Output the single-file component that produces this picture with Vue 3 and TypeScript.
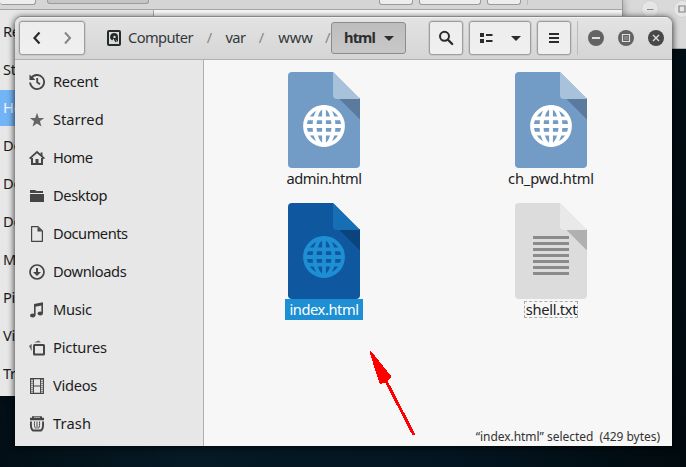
<script setup lang="ts">
interface Place { name: string; icon: string; tracking: number }
interface FileItem { name: string; kind: 'web' | 'text'; tracking: number; selected?: boolean; focused?: boolean }

const places: Place[] = [
  { name: 'Recent', icon: 'recent', tracking: -0.3 },
  { name: 'Starred', icon: 'starred', tracking: 0 },
  { name: 'Home', icon: 'home', tracking: -0.6 },
  { name: 'Desktop', icon: 'desktop', tracking: -0.4 },
  { name: 'Documents', icon: 'documents', tracking: -0.5 },
  { name: 'Downloads', icon: 'downloads', tracking: -0.38 },
  { name: 'Music', icon: 'music', tracking: -0.3 },
  { name: 'Pictures', icon: 'pictures', tracking: -0.15 },
  { name: 'Videos', icon: 'videos', tracking: -0.3 },
  { name: 'Trash', icon: 'trash', tracking: 0.15 },
]

// Only the first letters of these rows stay uncovered by the front window.
const coveredPlaces = places.map((p) => p.name.slice(0, 2))

const files: FileItem[] = [
  { name: 'admin.html', kind: 'web', tracking: -0.45 },
  { name: 'ch_pwd.html', kind: 'web', tracking: -0.15 },
  { name: 'index.html', kind: 'web', tracking: -0.42, selected: true },
  { name: 'shell.txt', kind: 'text', tracking: -0.3, focused: true },
]
</script>

<template>
  <div class="desktop">
    <div class="far-window">
      <span class="ghost"><svg width="16" height="16" viewBox="0 0 16 16"><path d="M5 8.500h6.500" stroke="#8a8a8a" fill="none" /></svg></span>
      <span class="ghost"><svg width="16" height="16" viewBox="0 0 16 16"><path d="M5 5h6v6H5z" stroke="#858585" stroke-width="1.200" fill="none" /></svg></span>
    </div>

    <div class="back-window">
      <div class="back-header">
        <i class="stub first"></i><i class="stub path"></i><i class="stub search"></i><i class="stub view"></i><i class="stub menu"></i><i class="stub-line"></i>
      </div>
      <div class="back-body">
        <ul class="back-side">
          <li v-for="(text, i) in coveredPlaces" :key="i" :class="{ active: i === 2 }">{{ text }}</li>
        </ul>
        <div class="back-files"></div>
      </div>
    </div>

    <div class="window">
      <header class="bar">
        <div class="btn nav">
          <svg width="33" height="32" viewBox="0 0 33 32"><path d="M19.500 10.500l-5 5.500 5 5.500" fill="none" stroke="#2b2b2b" stroke-width="2.200" /></svg>
          <svg width="33" height="32" viewBox="0 0 33 32"><path d="M13 10.500l5 5.500-5 5.500" fill="none" stroke="#858585" stroke-width="2" /></svg>
        </div>
        <nav class="crumbs">
          <svg class="disk" width="14" height="16" viewBox="0 0 14 16">
            <rect x="1" y="1" width="12" height="14" rx="1" fill="none" stroke="#252a2b" stroke-width="2" />
            <path d="M7 3a4 4 0 0 0-1.800 7.500L7 8l4 4V7a4 4 0 0 0-4-4z" fill="#252a2b" /><circle cx="7.500" cy="7" r="1.200" fill="#ddd" />
            <path d="M7 8l2 4" stroke="#252a2b" stroke-width="1.500" />
          </svg>
          <span class="crumb computer">Computer</span>
          <span class="slash">/</span>
          <span class="crumb var">var</span>
          <span class="slash">/</span>
          <span class="crumb www">www</span>
          <span class="slash last">/</span>
          <button class="current"><span>html</span><svg width="10" height="5" viewBox="0 0 10 5"><path d="M0 0h10L5 5z" fill="#2e2e2e" /></svg></button>
        </nav>
        <div class="tools">
          <div class="btn square"><svg width="16" height="16" viewBox="0 0 16 16"><circle cx="6.500" cy="6.300" r="4.500" fill="none" stroke="#2b2b2b" stroke-width="2" /><path d="M9.700 9.500l4.500 4.500" stroke="#2b2b2b" stroke-width="2.300" stroke-linecap="round" /></svg></div>
          <div class="btn view">
            <svg width="13" height="10" viewBox="0 0 13 10"><path d="M0 0h4v4H0zM0 6h4v4H0zM6 1h6.500v2H6zM6 7h6.500v2H6z" fill="#2b2b2b" /></svg>
            <svg width="10" height="5" viewBox="0 0 10 5"><path d="M0 0h10L5 5z" fill="#2b2b2b" /></svg>
          </div>
          <div class="btn square"><svg width="10" height="10" viewBox="0 0 10 10"><path d="M0 0h10v2H0zM0 4h10v2H0zM0 8h10v2H0z" fill="#2b2b2b" /></svg></div>
        </div>
        <div class="controls">
          <svg width="16" height="16" viewBox="0 0 16 16"><circle cx="8" cy="8" r="8" fill="#636363" /><path d="M4 7h8v2H4z" fill="#dedede" /></svg>
          <svg width="16" height="16" viewBox="0 0 16 16"><circle cx="8" cy="8" r="8" fill="#636363" /><path d="M4.500 4.500h7v7h-7z" fill="none" stroke="#dedede" stroke-width="1.200" /><path d="M6 6h4v4H6z" fill="#858585" /></svg>
          <svg width="16" height="16" viewBox="0 0 16 16"><circle cx="8" cy="8" r="8" fill="#484848" /><path d="M5 5l6 6M11 5l-6 6" stroke="#dedede" stroke-width="1.400" /></svg>
        </div>
      </header>

      <div class="body">
        <ul class="side">
          <li v-for="p in places" :key="p.name">
            <svg width="16" height="16" viewBox="0 0 16 16" fill="none" stroke="#454545">
              <template v-if="p.icon === 'recent'">
                <path d="M2.200 4.200A7 7 0 1 1 1.100 8.500" stroke-width="1.800" /><path d="M.5.500L6 5.500V6H.5z" fill="#454545" stroke="none" /><path d="M8.200 4v4.200l2.800 2" stroke-width="1.800" />
              </template>
              <path v-else-if="p.icon === 'starred'" d="M8 .8l1.800 5.200h5.400l-4.300 3.300 1.600 5.300L8 11.400l-4.500 3.200 1.600-5.300L.8 6h5.400z" fill="#666" stroke="none" />
              <template v-else-if="p.icon === 'home'">
                <path d="M.6 8.600L8 2l7.400 6.600" stroke-width="1.700" /><path d="M3 8v6h10V8" stroke-width="2" /><path d="M6.500 9h3v5h-3zM11.500 2.500h2v4l-2-2z" fill="#454545" stroke="none" />
              </template>
              <path v-else-if="p.icon === 'desktop'" d="M1 2h5l1.500 1H14v2H1zM1 6h14v8H1z" fill="#454545" stroke="none" />
              <template v-else-if="p.icon === 'documents'">
                <path d="M2.600.6H9l4.400 4.400v10.300H2.600z" stroke-width="1.200" stroke-linejoin="round" /><path d="M8.500 1v4.500H13z" fill="#454545" stroke="none" />
              </template>
              <template v-else-if="p.icon === 'downloads'">
                <circle cx="8" cy="8" r="7" stroke-width="1.700" /><path d="M7 4h2v4h3l-4 4-4-4h3z" fill="#454545" stroke="none" />
              </template>
              <template v-else-if="p.icon === 'music'">
                <path d="M5 2l9-1.800v3L5 5z" fill="#454545" stroke="none" /><path d="M5.800 3v10M13.200 2v9" stroke-width="1.600" /><ellipse cx="3.700" cy="13.500" rx="2.700" ry="2" fill="#454545" stroke="none" /><ellipse cx="11.300" cy="11.500" rx="2.700" ry="2" fill="#454545" stroke="none" />
              </template>
              <template v-else-if="p.icon === 'pictures'">
                <rect x="5" y="5" width="10" height="9.500" rx=".5" stroke-width="2" /><path d="M5 2.500L9.500.5 12 2.500zM0 6l2.700-2.300v7.500z" fill="#666" stroke="none" />
              </template>
              <template v-else-if="p.icon === 'videos'">
                <path d="M1.600.6h12.800v14.800H1.600zM4.400.6v14.800M11.600.6v14.800M4.400 8h7.200" stroke-width="1.100" /><path d="M3 1v14M13 1v14" stroke-width="1" stroke-dasharray="1 1" />
              </template>
              <template v-else>
                <path d="M3 .3h10v1.500h2v2.500H1V1.800h2z" fill="#454545" stroke="none" /><path d="M5 1.400h6" stroke="#ddd" stroke-width=".7" /><path d="M2 5.500c-.4 4 .3 7.700 2 9h8c1.700-1.300 2.400-5 2-9" stroke-width="1.900" /><path d="M5.500 5.500c-.3 3 0 5.500 1 7M8 5.500v7M10.500 5.500c.3 3 0 5.500-1 7" stroke-width="1" />
              </template>
            </svg>
            <span class="place" :style="{ letterSpacing: p.tracking + 'px' }">{{ p.name }}</span>
          </li>
        </ul>

        <main class="files">
          <div v-for="f in files" :key="f.name" class="file" :class="[f.kind, { selected: f.selected, focused: f.focused }]">
            <svg width="72" height="96" viewBox="0 0 72 96">
              <path class="sheet" d="M4 0h41l27 27v65a4 4 0 0 1-4 4H4a4 4 0 0 1-4-4V4a4 4 0 0 1 4-4z" />
              <path class="shade" d="M50.500 26L72 47.500V26z" />
              <path class="fold" d="M45 0l27 27H49a4 4 0 0 1-4-4z" />
              <g v-if="f.kind === 'web'" class="globe">
                <circle cx="36" cy="54" r="19" />
                <ellipse cx="36" cy="54" rx="9.500" ry="19" />
                <path d="M36 35v38M19 46.300h34M17 54h38M19 61.700h34" />
              </g>
              <path v-else class="lines" d="M18 34.500h36M18 40.500h36M18 46.500h36M18 52.500h36M18 58.500h36M18 64.500h36M18 70.500h36" />
            </svg>
            <span class="label" :style="{ letterSpacing: f.tracking + 'px' }">{{ f.name }}</span>
          </div>
        </main>
        <div class="status">“index.html” selected&nbsp; (429 bytes)</div>
      </div>
    </div>

    <svg class="pointer" width="60" height="100" viewBox="0 0 60 100" shape-rendering="crispEdges">
      <path d="M10.500 12l20 25-4 4-6 2z" fill="#f00" stroke="#f00" stroke-width="2" stroke-linejoin="round" /><path d="M26 41l28 54" stroke="#f00" stroke-width="3" />
    </svg>
  </div>
</template>

<style>
body { margin: 0; overflow: hidden; }
</style>

<style scoped>
* { box-sizing: border-box; }
.desktop { position: relative; width: 686px; height: 467px; overflow: hidden; background: linear-gradient(100deg, #020a10 0%, #051a25 35%, #031520 70%, #010a0f 100%); font-family: "Noto Sans", sans-serif; font-size: 14.670px; color: #1c1c1c; }
ul { list-style: none; margin: 0; padding: 0; }
svg { display: block; flex: none; }
.far-window { position: absolute; left: 600px; top: 0; width: 86px; height: 49px; padding: 1px 0 0 42px; display: flex; gap: 16px; background: #d9d9d9; border-bottom: 1px solid #aaa; }
.ghost { flex: none; width: 16px; height: 16px; border-radius: 50%; background: #e5e5e5; box-shadow: 0 0 0 .5px #c8c8c8; }
.back-window { position: absolute; left: 0; top: 0; width: 623px; height: 396px; background: #f7f7f7; border-right: 1px solid #999; box-shadow: 0 0 8px rgba(0,0,0,.35); }
.back-header { height: 10px; display: flex; align-items: flex-start; background: #d5d5d5; border-bottom: 1px solid #a5a5a5; }
.stub { height: 5px; flex: none; background: #ededed; border: 1px solid #9b9b9b; border-top: 0; border-radius: 0 0 3px 3px; }
.stub.first { width: 36px; margin-right: 11px; border-left: 0; }
.stub.path { width: 102px; height: 4px; background: #c5c5c5; margin-right: 230px; }
.stub.search { width: 34px; margin-right: 6px; }
.stub.view { width: 62px; margin-right: 6px; }
.stub.menu { width: 34px; margin-right: 6px; }
.stub-line { width: 1px; height: 5px; flex: none; background: #bcbcbc; }
.back-body { display: flex; height: 386px; }
.back-side { width: 154px; padding-top: 2px; border-right: 1px solid #aaa; background: #e7e7e7; }
.back-side li { height: 38px; line-height: 38px; padding-left: 3px; letter-spacing: -.3px; }
.back-side li.active { height: 36px; margin: 2px 0 0; line-height: 35px; color: #eef6ff; background: #72b4f5; }
.back-files { flex: 1; }
.window { position: absolute; left: 15px; top: 17px; width: 657px; height: 429px; display: flex; flex-direction: column; overflow: hidden; border-radius: 7px 7px 0 0; background: #f7f7f7; box-shadow: 0 -1px 0 0 #868686, 0 1px 6px 1px rgba(0,0,0,.7); }
.bar { height: 43px; flex: none; display: flex; align-items: flex-start; padding: 4px 8px 0 4px; border-top: 1px solid #f2f2f2; border-bottom: 1px solid #b0b0b0; background: linear-gradient(#e3e3e3, #d5d5d5); }
.btn { height: 34px; display: flex; align-items: center; border: 1px solid #9d9d9d; border-radius: 3px; background: linear-gradient(#ededed, #f0f0f0); box-shadow: 0 0 0 .5px #bababa; }
.nav { width: 66px; flex: none; margin-top: -1px; }
.nav svg:last-child { margin-left: -1px; }
.crumbs { height: 32px; display: flex; align-items: center; width: 321px; margin-left: 22px; color: #33383a; }
.crumb { flex: none; white-space: nowrap; }
.computer { width: 84px; padding-left: 7px; letter-spacing: -.58px; }
.slash { width: 9px; flex: none; color: #888; text-align: center; }
.var { width: 43px; text-align: center; letter-spacing: -.5px; }
.www { width: 59px; text-align: center; }
.slash.last { width: 5px; margin-right: 1px; }
.current { width: 75px; height: 32px; flex: none; display: flex; align-items: center; justify-content: space-between; padding: 0 11px 0 12px; font: 700 14.670px "Noto Sans", sans-serif; letter-spacing: -.9px; color: #2e2e2e; background: linear-gradient(#bdbdbd, #c8c8c8); border: 1px solid #8c8c8c; border-radius: 3px; }
.current span { margin-top: -2px; }
.tools { display: flex; gap: 6px; margin-top: -1px; margin-left: 1px; }
.square { width: 34px; justify-content: center; }
.view { width: 62px; padding: 0 9px 0 10px; justify-content: space-between; }
.computer, .var, .www, .slash { margin-top: -2px; }
.controls { display: flex; gap: 14px; height: 34px; margin-top: -1px; padding-left: 10px; align-items: center; border-left: 1px solid #bcbcbc; margin-left: auto; }
.body { flex: 1; display: flex; position: relative; min-height: 0; }
.side { width: 189px; padding-top: 3px; background: #e7e7e7; border-right: 1px solid #b0b0b0; }
.side li { height: 38px; display: flex; align-items: center; gap: 8px; padding-left: 14px; }
.place { margin-top: -2px; }
.files { flex: 1; display: grid; grid-template-columns: 227px 227px; grid-auto-rows: 131px; align-content: start; padding: 12px 0 0 7px; }
.file { display: flex; flex-direction: column; align-items: center; padding-right: 1px; }
.label { height: 21px; line-height: 18px; padding: 0 4px; border: 1px solid transparent; border-width: 1px 0; color: #222; }
.sheet { fill: #729bc5; }
.shade { fill: #5a7b9e; }
.fold { fill: #a9c2dc; }
.globe { fill: none; stroke: #fff; stroke-width: 3.800; }
.selected .sheet { fill: #0f579e; }
.selected .shade { fill: #0b447d; }
.selected .fold { fill: #166fb5; }
.selected .globe { stroke: #1e8fd2; }
.selected .label { background: #1e8fd2; color: #fff; }
.text .sheet { fill: #dcdcdc; }
.text .shade { fill: #b0b0b0; }
.text .fold { fill: #e9e9e9; }
.lines { stroke: #8b8b8b; stroke-width: 3; fill: none; }
.focused .label { height: 17px; margin-top: 2px; line-height: 14px; padding: 0 0 0 1px; border: 1px dashed #aaa; }
.status { position: absolute; right: 12px; bottom: 1px; font-size: 12px; line-height: 17px; letter-spacing: -.04px; color: #333; }
.pointer { position: absolute; left: 360px; top: 340px; }
</style>
